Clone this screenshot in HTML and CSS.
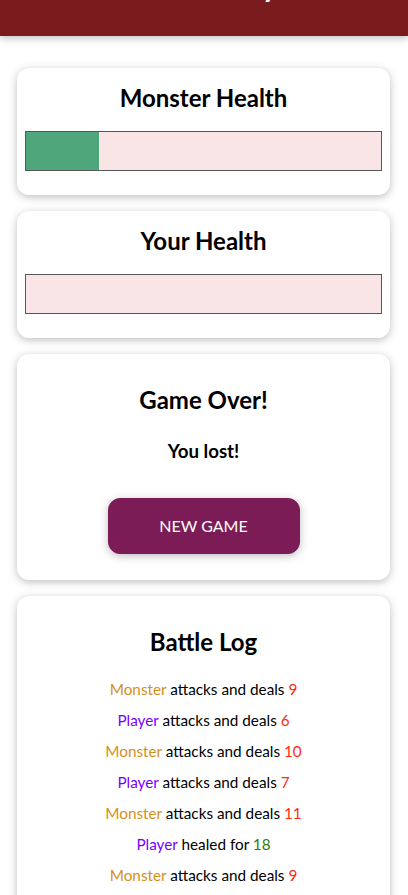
FILE: index.html
```html
<!DOCTYPE html>
<html lang="en">
<head>
<meta charset="utf-8">
<title>Monster Slayer</title>
<link rel="stylesheet" href="styles.css">
</head>
<body>
<div class="page">
  <header class="top">
    <h1 class="top__title">Monster Slayer</h1>
  </header>
  <div class="game">
    <section class="container card-health">
      <h2 class="card-title">Monster Health</h2>
      <div class="healthbar">
        <div class="healthbar__value" style="width: 20.6%"></div>
      </div>
    </section>
    <section class="container card-health">
      <h2 class="card-title">Your Health</h2>
      <div class="healthbar">
        <div class="healthbar__value" style="width: 0%"></div>
      </div>
    </section>
    <section class="container card-over">
      <h2 class="card-title card-title--spaced">Game Over!</h2>
      <h3 class="result">You lost!</h3>
      <button class="btn">NEW GAME</button>
    </section>
    <section class="container card-log">
      <h2 class="card-title card-title--spaced">Battle Log</h2>
      <ul class="log">
        <li><span class="log--monster">Monster</span> attacks and deals <span class="log--damage">9</span></li>
        <li><span class="log--player">Player</span> attacks and deals <span class="log--damage">6</span></li>
        <li><span class="log--monster">Monster</span> attacks and deals <span class="log--damage">10</span></li>
        <li><span class="log--player">Player</span> attacks and deals <span class="log--damage">7</span></li>
        <li><span class="log--monster">Monster</span> attacks and deals <span class="log--damage">11</span></li>
        <li><span class="log--player">Player</span> healed for <span class="log--heal">18</span></li>
        <li><span class="log--monster">Monster</span> attacks and deals <span class="log--damage">9</span></li>
        <li><span class="log--player">Player</span> attacks and deals <span class="log--damage">8</span></li>
        <li><span class="log--monster">Monster</span> attacks and deals <span class="log--damage">12</span></li>
      </ul>
    </section>
  </div>
</div>
</body>
</html>
```

FILE: styles.css
```css
* {
  box-sizing: border-box;
}

html {
  font-family: "Lato", "Open Sans", sans-serif;
}

body {
  margin: 0;
  background: #ffffff;
  color: #000000;
}

.page {
  margin-top: -67px;
}

.top {
  padding: 8px;
  background-color: #7a1c1e;
  color: #ffffff;
  text-align: center;
  margin-bottom: 32px;
  box-shadow: 0 2px 8px rgba(0, 0, 0, 0.26);
  position: relative;
}

.top__title {
  margin: 21px 0 20px;
  font-size: 30px;
  line-height: 46px;
  font-weight: 700;
}

.game {
  display: flow-root;
}

.container {
  margin: 16px 18px 16px 17px;
  text-align: center;
  padding: 8px;
  box-shadow: 0 2px 8px rgba(0, 0, 0, 0.26);
  border-radius: 12px;
  background: #ffffff;
}

.game > .container:first-child {
  margin-top: 0;
}

.card-title {
  margin: 5px 0 16px;
  font-size: 24px;
  line-height: 34px;
  font-weight: 700;
}

.card-title--spaced {
  margin-top: 21px;
  margin-bottom: 19px;
}

.healthbar {
  width: 100%;
  height: 40px;
  border: 1px solid #575757;
  margin: 0 0 16px;
  background: #f9e5e5;
}

.healthbar__value {
  background-color: #4fa67a;
  height: 100%;
}

.card-over {
  padding-bottom: 10px;
}

.result {
  margin: 0 0 17px;
  font-size: 18.72px;
  line-height: 27px;
  font-weight: 700;
}

.card-over .card-title {
  margin-bottom: 21px;
}

.btn {
  font: inherit;
  font-size: 16px;
  line-height: 24px;
  border: 1px solid #7c1c57;
  background-color: #7c1c57;
  color: #ffffff;
  padding: 15px 32px;
  border-radius: 12px;
  margin: 16px;
  width: 192px;
  height: 56px;
  box-shadow: 0 2px 8px rgba(0, 0, 0, 0.26);
  cursor: pointer;
}

.log {
  list-style: none;
  margin: 0;
  padding: 0;
}

.log li {
  margin: 8px 0;
  font-size: 15.3px;
  line-height: 23px;
}

.log li:first-child {
  margin-top: 0;
}

.log--player {
  color: #7700ff;
}

.log--monster {
  color: #d4901c;
}

.log--damage {
  color: #ff2a12;
}

.log--heal {
  color: #2e7d14;
}
```
